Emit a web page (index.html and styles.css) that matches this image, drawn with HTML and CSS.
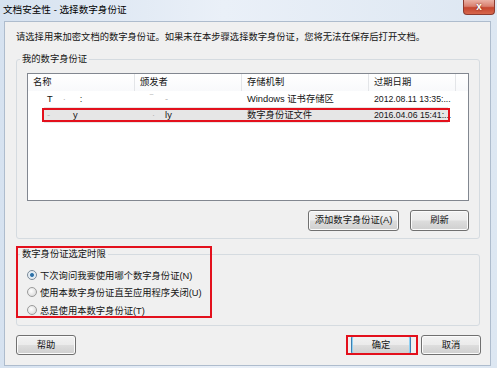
FILE: index.html
```html
<!DOCTYPE html>
<html lang="zh-CN">
<head>
<meta charset="utf-8">
<title>文档安全性 - 选择数字身份证</title>
<link rel="stylesheet" href="styles.css">
</head>
<body>
<div class="window">
  <div class="titlebar">
    <span class="title">文档安全性 - 选择数字身份证</span>
    <span class="close">x</span>
  </div>
  <div class="panel">
    <p class="intro">请选择用来加密文档的数字身份证。如果未在本步骤选择数字身份证，您将无法在保存后打开文档。</p>

    <div class="group group-ids">
      <div class="group-label">我的数字身份证</div>
      <div class="listbox">
        <div class="row head">
          <div class="cell">名称</div>
          <div class="cell">颁发者</div>
          <div class="cell">存储机制</div>
          <div class="cell">过期日期</div>
          <div class="cell filler"></div>
        </div>
        <div class="row item">
          <div class="cell c-name1">T<span class="faint f1">·</span><span class="faint f2">:</span></div>
          <div class="cell c-iss1"><span class="faint">‾</span><span class="faint f3">-</span></div>
          <div class="cell">Windows 证书存储区</div>
          <div class="cell date">2012.08.11 13:35:...</div>
          <div class="cell filler"></div>
        </div>
        <div class="row item selected">
          <div class="cell c-name2"><span class="faint">-</span><span class="f4">y</span></div>
          <div class="cell c-iss2"><span class="faint">·</span><span class="f5">ly</span></div>
          <div class="cell">数字身份证文件</div>
          <div class="cell date">2016.04.06 15:41:...</div>
          <div class="cell filler"></div>
        </div>
        <div class="annot row-annot"></div>
      </div>
      <div class="actions">
        <button class="btn btn-add">添加数字身份证(A)</button>
        <button class="btn btn-refresh">刷新</button>
      </div>
    </div>

    <div class="group group-time">
      <div class="group-label">数字身份证选定时限</div>
      <div class="radios">
        <label class="radio"><span class="dot checked"></span>下次询问我要使用哪个数字身份证(N)</label>
        <label class="radio"><span class="dot"></span>使用本数字身份证直至应用程序关闭(U)</label>
        <label class="radio"><span class="dot"></span>总是使用本数字身份证(T)</label>
      </div>
      <div class="annot time-annot"></div>
    </div>

    <div class="footer">
      <button class="btn btn-help">帮助</button>
      <span class="ok-wrap"><button class="btn btn-ok">确定</button></span>
      <button class="btn btn-cancel">取消</button>
    </div>
  </div>
</div>
</body>
</html>
```
FILE: styles.css
```css
* { box-sizing: border-box; }
html, body { margin: 0; padding: 0; }
body {
  width: 497px;
  height: 368px;
  overflow: hidden;
  font-family: "Liberation Sans", "Noto Sans CJK SC", sans-serif;
  font-size: 9.3px;
  color: #151515;
  background: #dfe8f3;
}
.window {
  width: 497px;
  height: 368px;
  display: flex;
  flex-direction: column;
  background: linear-gradient(to right, #d6e2f0 0%, #eaf0f8 45%, #dde7f2 100%);
}
.titlebar {
  height: 21px;
  display: flex;
  align-items: flex-start;
}
.title {
  margin: 4px 0 0 3px;
  line-height: 12px;
  font-size: 9.6px;
  color: #000;
}
.close {
  margin-left: auto;
  margin-right: 2px;
  width: 32px;
  height: 15px;
  border: 1px solid #8d3b2f;
  border-top: none;
  border-radius: 0 0 4px 4px;
  background: linear-gradient(#eab1a5 0%, #d9806f 45%, #c5462f 55%, #d7674c 100%);
  color: #fff;
  font-weight: bold;
  font-size: 10px;
  line-height: 13px;
  text-align: center;
  text-shadow: 0 0 2px #6b1f14;
}
.panel {
  flex: 1;
  margin: 0 6px 2px 4px;
  background: #f0f0f0;
  border: 1px solid #aebccd;
  display: flex;
  flex-direction: column;
}
.intro {
  margin: 8px 0 0 11px;
  line-height: 14px;
}
.group {
  position: relative;
  margin: 15px 10px 0 11px;
  border: 1px solid #d5dbe0;
  border-radius: 3px;
  padding: 0 10px 7px 10px;
  display: flex;
  flex-direction: column;
}
.group-label {
  align-self: flex-start;
  margin: -8px 0 0 -7px;
  padding: 0 2px;
  background: #f0f0f0;
  line-height: 14px;
}
.listbox {
  position: relative;
  margin-top: 7px;
  height: 128px;
  background: #fff;
  border: 1px solid #828790;
}
.row {
  display: grid;
  grid-template-columns: 107px 107px 127px 87px 1fr;
  align-items: center;
}
.row.head {
  height: 17px;
  background: linear-gradient(#ffffff, #f8f9fb);
}
.row.head .cell {
  border-right: 1px solid #e3e5e8;
  height: 17px;
  line-height: 17px;
}
.row.head .filler { border-right: none; }
.row.item { height: 16px; }
.row.selected {
  background: linear-gradient(to right, transparent 16px, #e6e6e6 16px, #e6e6e6 420px, transparent 420px);
}
.cell {
  padding-left: 5px;
  white-space: nowrap;
  overflow: hidden;
  line-height: 16px;
}
.cell.date { font-size: 8.7px; }
.c-name1 { padding-left: 19px; }
.c-iss1 { padding-left: 15px; }
.c-name2 { padding-left: 19px; }
.c-iss2 { padding-left: 17px; }
.faint { color: #b5b5b5; }
.f1 { margin-left: 10px; }
.f2 { margin-left: 14px; color: #333; }
.f3 { margin-left: 12px; }
.f4 { margin-left: 23px; }
.f5 { margin-left: 10px; }
.annot {
  position: absolute;
  border: 2px solid #e3101c;
  pointer-events: none;
}
.row-annot {
  left: 14px;
  top: 34px;
  width: 408px;
  height: 14px;
}
.actions {
  display: flex;
  justify-content: flex-end;
  gap: 11px;
  margin-top: 9px;
}
.btn {
  font: inherit;
  color: #151515;
  height: 21px;
  padding: 0;
  border: 1px solid #707070;
  border-radius: 3px;
  background: linear-gradient(#f2f2f2 0%, #ebebeb 48%, #dddddd 52%, #cfcfcf 100%);
  box-shadow: inset 0 0 0 1px #fbfbfb;
  line-height: 19px;
  text-align: center;
}
.btn-add { width: 91px; }
.btn-refresh { width: 59px; }
.group-time {
  padding-bottom: 6px;
}
.radios {
  display: flex;
  flex-direction: column;
  padding-top: 5px;
}
.radio {
  height: 17.5px;
  display: flex;
  align-items: center;
  gap: 3px;
}
.dot {
  width: 10px;
  height: 10px;
  border-radius: 50%;
  border: 1px solid #9a9a9a;
  background: radial-gradient(circle at 40% 40%, #ffffff 0%, #e4e4e4 60%, #cfcfcf 100%);
}
.dot.checked {
  background: radial-gradient(circle, #2a6196 0%, #3f84b8 32%, #dfeaf3 40%, #f2f2f2 100%);
  border-color: #7a8a99;
}
.time-annot {
  left: -1px;
  top: -9px;
  width: 196px;
  height: 72px;
}
.footer {
  display: flex;
  align-items: center;
  margin-top: 9px;
  padding: 0 9px 0 11px;
}
.footer .btn { width: 60px; height: 20px; line-height: 18px; }
.btn-help { margin-right: auto; }
.ok-wrap {
  position: relative;
  display: flex;
  margin-right: 10px;
}
.ok-wrap::after {
  content: "";
  position: absolute;
  left: -5px;
  right: -7px;
  top: 0;
  bottom: 0;
  border: 2px solid #e3101c;
}
.footer .btn-ok {
  border-color: #3c7fb1;
  box-shadow: inset 0 0 0 1px #8fd0f2;
}
```
